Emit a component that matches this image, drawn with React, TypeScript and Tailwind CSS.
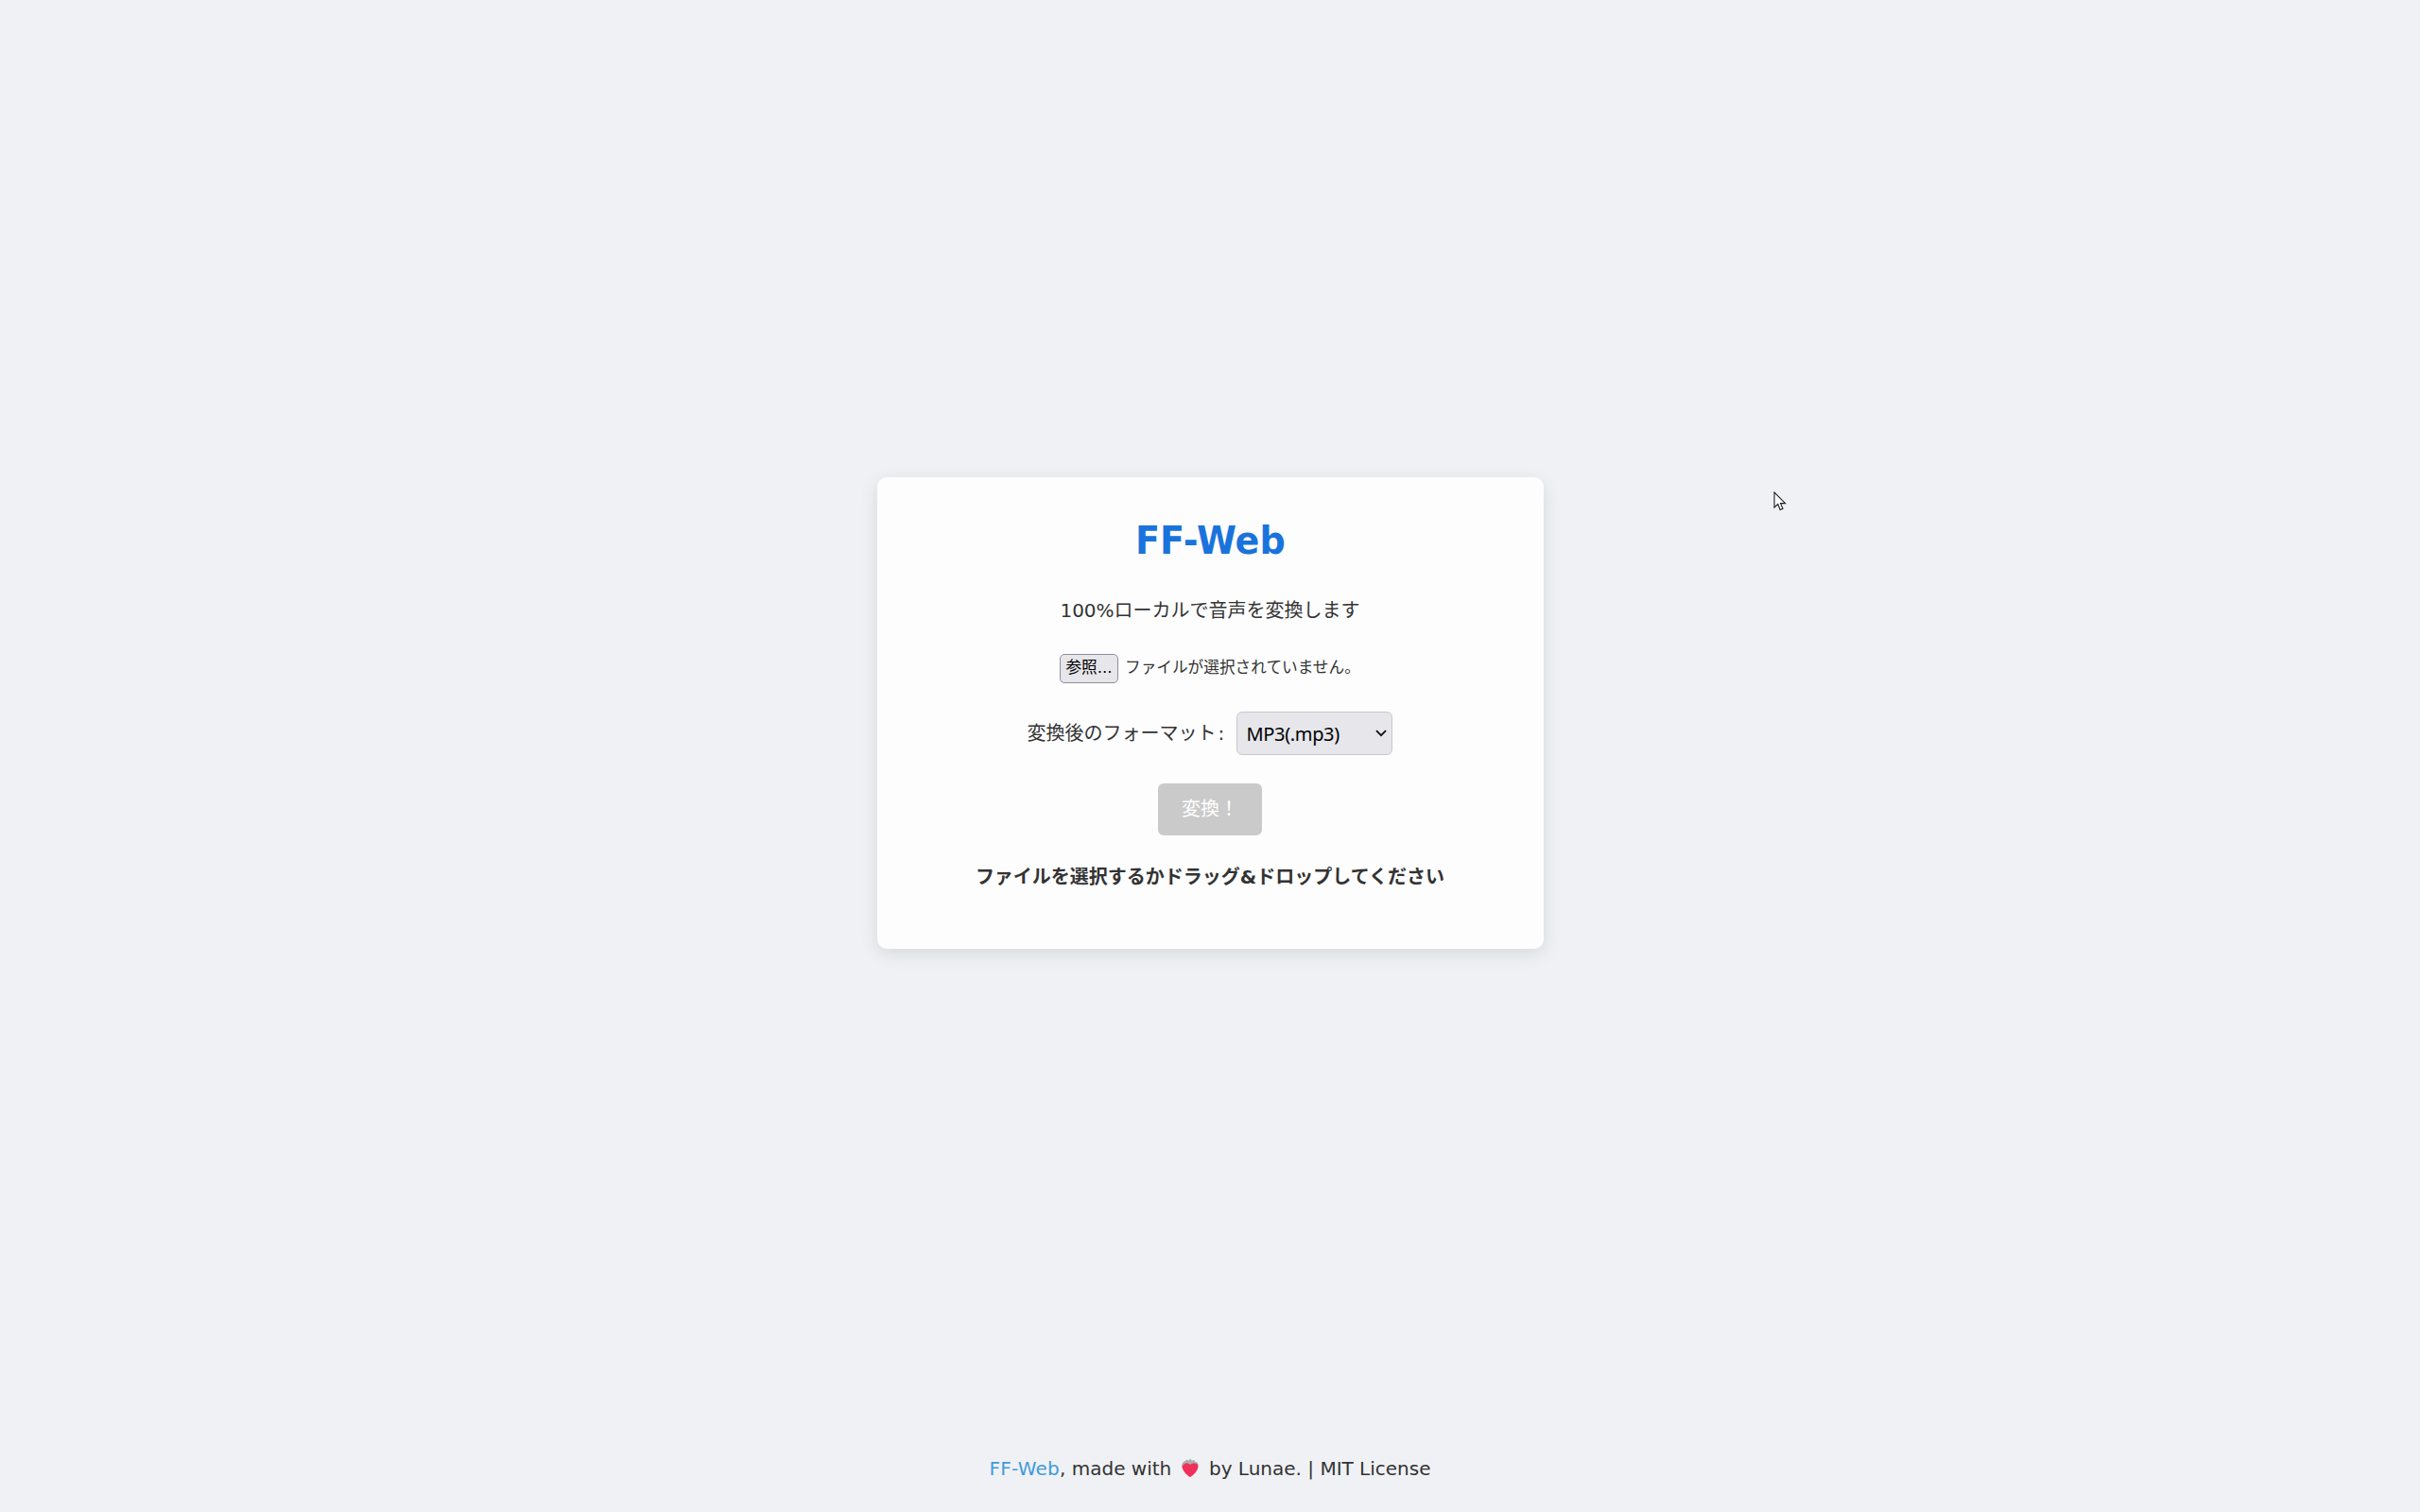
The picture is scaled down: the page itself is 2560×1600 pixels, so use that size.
import React from "react";

function Strawberry() {
  return (
    <svg viewBox="0 0 20 22" className="h-[21px] w-5" aria-label="strawberry">
      <path d="M10 21C7.500 20 1 14 1 9C1 5 5 3 10 6.500C15 3 19 5 19 9C19 14 12.500 20 10 21Z" fill="#f0305a" />
      <path d="M1.200 9C.5 5.500 3 3.500 5 3L6 1.500L8.500 2.500L10 .5L12 2.500L14.500 2L15.500 4C18 4.500 19 6 19 8C16 4.500 13 5 10 7C7 4.500 4 5 1.200 9Z" fill="#a9b0ac" />
    </svg>
  );
}

function FilePicker() {
  return (
    <div className="mt-[32px] flex h-[31px] items-center gap-[7px] pl-[118px] text-[16.67px] leading-none">
      <button className="h-[31px] w-[62px] rounded-[5px] border border-[#8f8f9d] bg-[#e6e6eb] text-center leading-none text-black">
        参照...
      </button>
      <span>ファイルが選択されていません。</span>
    </div>
  );
}

function FormatSelect() {
  return (
    <div className="mt-[30px] flex h-[46px] items-center">
      <span className="w-[221px] pb-px leading-none">
        変換後のフォーマット<span className="ml-[2px]">:</span>
      </span>
      <button className="mr-px flex h-[46px] w-[165px] items-center justify-between rounded-[6px] border border-[#c8c8cc] bg-[#e6e6eb] pr-[5px] pl-[10px] font-['Noto_Sans',sans-serif] text-black">
        <span className="pt-px text-[20px] leading-none tracking-[-0.35px]">MP3(.mp3)</span>
        <svg viewBox="0 0 12 8" className="h-2 w-3" fill="none" stroke="#111" strokeWidth="1.800">
          <path d="M1 1.200L6 6.200L11 1.200" />
        </svg>
      </button>
    </div>
  );
}

export default function App() {
  return (
    <div className="relative flex h-[1600px] w-[2560px] flex-col items-center bg-[#f0f1f5] font-['DejaVu_Sans','Noto_Sans_CJK_JP',sans-serif] text-[20px] text-[#333]">
      <main className="mt-[505px] flex h-[499px] w-[705px] flex-col items-center rounded-[10px] bg-[#fdfdfe] shadow-[0_5px_19px_rgba(0,0,0,0.1)]">
        <h1 className="mt-[43px] h-[48px] origin-center scale-x-[0.952] text-[40px] leading-[48px] font-bold text-[#1a73dc]">
          FF-Web
        </h1>
        <p className="mt-[35px] h-[30px] leading-[30px]">100%ローカルで音声を変換します</p>
        <div className="mt-[-1px] w-[554px]">
          <FilePicker />
        </div>
        <FormatSelect />
        <button className="mt-[30px] h-[55px] w-[110px] rounded-[6px] bg-[#cacaca] pb-[2px] text-center leading-none text-white">
          変換！
        </button>
        <p className="mt-[29px] h-[30px] leading-[30px] font-bold">
          ファイルを選択するかドラッグ&ドロップしてください
        </p>
      </main>
      <footer className="mt-[535px] flex h-[30px] items-center whitespace-pre leading-[30px]">
        <a className="tracking-[0.25px] text-[#3f9bdb]">FF-Web</a>
        <span>, made with </span>
        <span className="mr-[4px] ml-[3px] pb-[2px]"><Strawberry /></span>
        <span> by Lunae. | MIT License</span>
      </footer>
      <svg viewBox="0 0 14 21" className="absolute top-[520px] left-[1876px] h-[21px] w-[14px]">
        <path d="M1 1V17L4.700 13.500L7.200 19.500L10 18.300L7.500 12.600H12.500Z" fill="#fff" stroke="#1c1c20" strokeWidth="1.100" />
      </svg>
    </div>
  );
}
